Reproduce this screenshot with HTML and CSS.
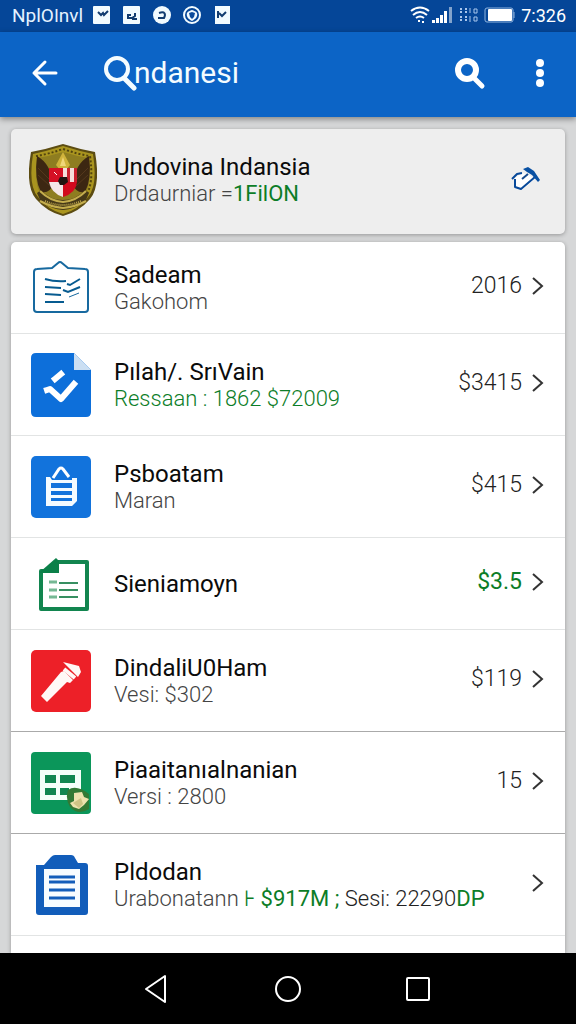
FILE: index.html
```html
<!DOCTYPE html>
<html lang="id">
<head>
    <meta charset="UTF-8">
    <meta name="viewport" content="width=device-width, initial-scale=1.0">
    <title>ndanesi</title>
    <link rel="stylesheet" href="styles.css">
</head>
<body>
    <div class="status-bar">
        <span class="carrier">NplO&#x1C0;nvl</span>
        <div class="notifications">
            <svg width="18" height="18" viewBox="0 0 18 18"><rect width="17" height="18" rx="1" fill="#f2fbff"/><path d="M5 6l3 3 2-2 1 2 4-4" fill="none" stroke="#123c70" stroke-width="2"/></svg>
            <svg width="18" height="18" viewBox="0 0 18 18"><rect width="17" height="18" rx="1" fill="#f2fbff"/><path d="M8 9H5v3h4l3-2V7M9 13h5" fill="none" stroke="#123c70" stroke-width="2"/></svg>
            <svg width="18" height="18" viewBox="0 0 18 18"><circle cx="9" cy="9" r="9" fill="#f2fbff"/><path d="M6 7c6-2 7 1 5 5H5" fill="none" stroke="#123c70" stroke-width="2"/></svg>
            <svg width="18" height="18" viewBox="0 0 18 18"><circle cx="9" cy="9" r="8" fill="none" stroke="#f2fbff" stroke-width="2"/><path d="M9 15c-4-2-6-5-5-8 1-2 3-2 5-3 2 1 4 1 5 3 1 3-1 6-5 8z" fill="#f2fbff"/><path d="M6 7l3-1 3 1-1 4-2 2-2-2z" fill="#0c4c9c"/></svg>
            <svg width="18" height="18" viewBox="0 0 18 18"><rect x="2" width="15" height="18" fill="#f2fbff"/><path d="M6 7l3 3 4-4M5 5v7" fill="none" stroke="#123c70" stroke-width="2"/></svg>
        </div>
        <div class="system">
            <svg width="20" height="18" viewBox="0 0 20 18" fill="none" stroke="#fff" stroke-width="2"><path d="M1 5q9-7 18 0M3 9q7-6 14 0M6 12q4-3 8 0"/><path d="M8 15h2M12 16h2"/></svg>
            <svg width="20" height="18" viewBox="0 0 20 18" fill="#fff"><path d="M0 14h3v3H0zM4 12h3v5H4zM8 9h3v8H8zM12 5h3v12h-3z"/><path d="M17 1h3v16h-3z" opacity=".5"/></svg>
            <svg width="20" height="18" viewBox="0 0 20 18" fill="none" stroke="#a9c6ec" stroke-width="2"><path d="M3 2v5M8 2v5M3 10v6M8 10v6" stroke-dasharray="2 1"/><path d="M12 2v5M12 10v6M16 3h3v4h-3zM16 11h3v4h-3z" stroke-width="1"/></svg>
            <svg width="31" height="18" viewBox="0 0 31 18"><rect x="1" y="2" width="28" height="14" rx="2" fill="none" stroke="#8fb3de"/><rect x="4" y="3" width="24" height="12" rx="1" fill="#fff"/><path d="M30 6v6" stroke="#8fb3de"/></svg>
            <span class="clock">7:326</span>
        </div>
    </div>

    <header class="app-bar">
        <button class="icon-btn" aria-label="Back">
            <svg width="28" height="28" viewBox="0 0 28 28" fill="none" stroke="#fff" stroke-width="3" stroke-linecap="round" stroke-linejoin="round"><path d="M15 3L4 14l11 11M4 14h22"/></svg>
        </button>
        <h1>
            <svg width="34" height="36" viewBox="0 0 34 36" fill="none" stroke="#f4fcff" stroke-linecap="round"><circle cx="13" cy="14" r="11" stroke-width="4"/><path d="M21 24l9 9" stroke-width="5"/></svg>
            <span>ndanesi</span>
        </h1>
        <button class="icon-btn" aria-label="Search">
            <svg width="32" height="34" viewBox="0 0 32 34" fill="none" stroke="#fff" stroke-linecap="round"><circle cx="13" cy="14" r="9" stroke-width="6"/><path d="M21 23l7 7" stroke-width="5"/></svg>
        </button>
        <button class="icon-btn more" aria-label="More">
            <svg width="8" height="28" viewBox="0 0 8 28" fill="#fff"><circle cx="4" cy="4" r="4"/><circle cx="4" cy="14" r="4"/><circle cx="4" cy="24" r="4"/></svg>
        </button>
    </header>

    <main>
        <section class="card profile">
            <svg class="icon" width="68" height="72" viewBox="0 0 68 72">
                <path d="M2 8Q18 5 34 0q16 5 32 8 6 34-5 47-11 13-27 17Q18 68 7 55-4 42 2 8z" fill="#5c4c12"/>
                <path d="M4 10Q18 7 34 2q16 5 30 8 5 32-5 43-10 13-25 17Q19 66 9 53-1 42 4 10z" fill="#aa951f"/>
                <path d="M7 12q13-2 27-7 14 5 27 7 4 28-4 39" fill="none" stroke="#51430f" stroke-width="2" stroke-dasharray="2 2"/>
                <path d="M8 14q13-2 26-6 13 4 26 6 3 27-4 36Q48 62 34 66 20 62 12 50 5 41 8 14z" fill="#8e7d20"/>
                <path d="M8 12q14 8 16 28-3 10-12 8Q5 35 8 12zM60 12q-14 8-16 28 3 10 12 8 7-13 4-36z" fill="#3c2712"/>
                <path d="M9 24l12 12M9 31l12 11M59 24L47 36M59 31L47 42" stroke="#54381c"/>
                <path d="M34 8l7 13-4 5h-6l-4-5z" fill="#d0b33b"/><path d="M34 13l3 9h-6z" fill="#f0d679"/>
                <path d="M20 24h14v14H20z" fill="#d51024"/><path d="M34 24h14v14H34z" fill="#f5dedb"/>
                <path d="M38 24h3v14h-3zM45 24h3v14h-3z" fill="#c9202d"/>
                <path d="M20 38h14v15q-12-4-14-15z" fill="#f4e6e7"/><path d="M34 38h14q-1 11-14 15z" fill="#d20a1e"/>
                <path d="M31 33h7l1 5-4 3h-4l-2-4z" fill="#211411"/><path d="M25 28l3 3" stroke="#fff"/>
                <path d="M8 49l4-3q9 10 22 10t22-10l4 3-4 9q-11 7-22 8-11-1-22-8z" fill="#453817"/>
                <path d="M11 47q10 10 23 11 13-1 23-11M11 57q11 6 23 7 12-1 23-7" fill="none" stroke="#c4ad4d" stroke-width="2"/>
                <path d="M16 57q18 8 36 0" fill="none" stroke="#bda64b" stroke-width="2" stroke-dasharray="1 1"/>
            </svg>
            <div class="text">
                <h2>Undovina Indansia</h2>
                <p>Drdaurniar =<span class="green">1FilON</span></p>
            </div>
            <button class="icon-btn" aria-label="Edit">
                <svg width="32" height="28" viewBox="0 0 32 28" stroke-linejoin="round">
                    <path d="M6 12l7-5 5 1 8 5-13 11-6-3z" fill="#fff"/>
                    <path d="M3 13l5-5 5-1M6 13v8l6 2 14-12" fill="none" stroke="#08499a" stroke-width="2"/>
                    <path d="M14 3l5-2 6 4 6 9-2 2-6-7-5-3z" fill="#0850a3"/><path d="M13 13l6-5" stroke="#174a8c" stroke-width="2"/>
                </svg>
            </button>
        </section>

        <nav class="card list">
            <a href="#" class="row short">
                <svg class="icon" width="60" height="62" viewBox="0 0 60 62" fill="none" stroke="#17699f" stroke-width="2">
                    <path d="M6 12l15-1 6-5q2-2 4 0l6 5 17 1q3 0 3 3v37q0 3-3 3H6q-3 0-3-3V15q0-3 3-3z"/>
                    <path d="M14 22q10 3 21 2M14 30l16 1M14 37l16 1M14 45h19M36 27l3 1 10-6M32 33l5 2 12-5" stroke="#075b90"/><path d="M38 40l10-4" stroke-width="1"/>
                </svg>
                <div class="text"><h2>Sadeam</h2><p>Gakohom</p></div>
                <span class="value">2016</span>
                <svg class="chevron" width="12" height="20" viewBox="0 0 12 20"><path d="M1 2l9 8-9 8"/></svg>
            </a>
            <a href="#" class="row">
                <svg class="icon" width="60" height="64" viewBox="0 0 60 64">
                    <path d="M5 0h38l17 17v42q0 5-5 5H5q-5 0-5-5V5q0-5 5-5z" fill="#0d6fda"/><path d="M43 0l17 17H43z" fill="#cbdff3"/>
                    <path d="M24 26l6-5M16 37l3-1 11 10 13-15" fill="none" stroke="#fff" stroke-width="6" stroke-linecap="square" stroke-linejoin="round"/>
                </svg>
                <div class="text"><h2>P&#x131;lah/. Sr&#x131;Vain</h2><p class="green">Ressaan : 1862 $72009</p></div>
                <span class="value">$3415</span>
                <svg class="chevron" width="12" height="20" viewBox="0 0 12 20"><path d="M1 2l9 8-9 8"/></svg>
            </a>
            <a href="#" class="row">
                <svg class="icon" width="60" height="62" viewBox="0 0 60 62">
                    <rect width="60" height="62" rx="5" fill="#1273dc"/>
                    <path d="M22 22l6-9q2-2 4 0l6 8" fill="none" stroke="#fff" stroke-width="3"/>
                    <path d="M15 21h4l2 3h20v-2h5v23l-5 5H15z" fill="#f4fbff"/>
                    <path d="M20 27h21v5H20zM20 35h21v4H20zM20 42h21v3H20z" fill="#1273dc"/>
                </svg>
                <div class="text"><h2>Psboatam</h2><p>Maran</p></div>
                <span class="value">$415</span>
                <svg class="chevron" width="12" height="20" viewBox="0 0 12 20"><path d="M1 2l9 8-9 8"/></svg>
            </a>
            <a href="#" class="row short">
                <svg class="icon" width="60" height="62" viewBox="0 0 60 62">
                    <path d="M10 18h8L27 9h29v47H10z" fill="#fff" stroke="#12854f" stroke-width="4" stroke-linejoin="round"/>
                    <path d="M9 19L25 5l3 3v12H9z" fill="#0b8049"/>
                    <path d="M18 29h8M18 37h8M18 44h8" stroke="#75b894" stroke-width="3"/><path d="M28 30h19M28 37h19M28 44h19" stroke="#378f61" stroke-width="2"/>
                </svg>
                <div class="text"><h2>Sieniamoyn</h2></div>
                <span class="value green">$3.5</span>
                <svg class="chevron" width="12" height="20" viewBox="0 0 12 20"><path d="M1 2l9 8-9 8"/></svg>
            </a>
            <a href="#" class="row strong">
                <svg class="icon" width="60" height="62" viewBox="0 0 60 62">
                    <rect width="60" height="62" rx="5" fill="#ed2028"/>
                    <path d="M10 46l20-24 3-1 9 9-3 3-3-1-20 20zM32 12l16 4 2 6-3 5z" fill="#fff8f6"/><path d="M33 19l11 9" stroke="#fff8f6" stroke-width="4"/>
                </svg>
                <div class="text"><h2>DindaliU0Ham</h2><p>Vesi: $302</p></div>
                <span class="value">$119</span>
                <svg class="chevron" width="12" height="20" viewBox="0 0 12 20"><path d="M1 2l9 8-9 8"/></svg>
            </a>
            <a href="#" class="row strong">
                <svg class="icon" width="60" height="62" viewBox="0 0 60 62">
                    <rect width="60" height="62" rx="4" fill="#0b965a"/><path d="M9 18h41v30H9z" fill="#f5fff9"/>
                    <path d="M14 23h11v8H14zM29 23h15v8H29zM14 36h11v7H14zM29 36h9v7h-9z" fill="#128650"/>
                    <path d="M37 38q8-6 21 4v15q-11 7-19-2-5-8-2-17z" fill="#337934"/><path d="M43 41l8-1 2 5 5 2-5 6-5 4-6-2-3-4 4-2z" fill="#eee2ae"/><path d="M42 51l8-5 2 6-4 4z" fill="#cfc485"/>
                </svg>
                <div class="text"><h2>Piaaitan&#x131;alnanian</h2><p>Versi : 2800</p></div>
                <span class="value">15</span>
                <svg class="chevron" width="12" height="20" viewBox="0 0 12 20"><path d="M1 2l9 8-9 8"/></svg>
            </a>
            <a href="#" class="row">
                <svg class="icon" width="60" height="62" viewBox="0 0 60 62">
                    <path d="M5 11h8l7-8q2-2 4-2h16q3 0 4 3l3 5h7q3 0 3 3v46q0 3-3 3H8q-3 0-3-3z" fill="#125dba"/>
                    <path d="M13 15h36v38H13z" fill="#f7fcff"/><path d="M18 23h26M18 28h26M18 36h26M18 44h26" stroke="#125dba" stroke-width="3"/>
                </svg>
                <div class="text"><h2>Pldodan</h2><p>Urabonatann <span class="green">&#x22A6; $917M ;</span> <span class="dark">Sesi: 22290</span><span class="green">DP</span></p></div>
                <svg class="chevron" width="12" height="20" viewBox="0 0 12 20"><path d="M1 2l9 8-9 8"/></svg>
            </a>
        </nav>
    </main>

    <footer class="nav-bar">
        <button class="icon-btn" aria-label="Back"><svg width="28" height="30" viewBox="0 0 28 30" fill="none" stroke="#fff" stroke-width="2" stroke-linejoin="round"><path d="M21 2v26L2 15z"/></svg></button>
        <button class="icon-btn" aria-label="Home"><svg width="28" height="30" viewBox="0 0 28 30" fill="none" stroke="#fff" stroke-width="2"><circle cx="14" cy="15" r="12"/></svg></button>
        <button class="icon-btn" aria-label="Recent apps"><svg width="28" height="30" viewBox="0 0 28 30" fill="none" stroke="#fff" stroke-width="2"><rect x="3" y="4" width="22" height="22" rx="1"/></svg></button>
    </footer>
</body>
</html>
```
FILE: styles.css
```css
* {
    box-sizing: border-box;
}

body {
    margin: 0;
    min-height: 100vh;
    display: flex;
    flex-direction: column;
    background: #d6d7d8;
    font-family: Roboto, "Liberation Sans", sans-serif;
    color: #0b0b0b;
}

h1, h2, p {
    margin: 0;
    font-weight: 400;
}

svg {
    display: block;
    flex: none;
}

.icon-btn {
    display: flex;
    align-items: center;
    justify-content: center;
    padding: 0;
    border: none;
    background: none;
    cursor: pointer;
}

/* Status bar */
.status-bar {
    display: flex;
    align-items: center;
    height: 32px;
    padding: 0 10px 2px 12px;
    background: #054698;
    color: #e4f2ff;
    font-size: 18px;
}

.carrier {
    font-size: 19px;
}

.notifications {
    display: flex;
    gap: 12px;
    margin-left: 10px;
}

.system {
    display: flex;
    align-items: center;
    gap: 6px;
    margin-left: auto;
}

.system svg:first-child {
    margin-right: -4px;
}

.clock {
    color: #fff;
}

/* App bar */
.app-bar {
    display: flex;
    align-items: center;
    height: 85px;
    padding: 0 32px 4px 30px;
    background: #0c64c6;
    box-shadow: 0 2px 6px rgba(0, 0, 0, 0.4);
}

.app-bar h1 {
    display: flex;
    align-items: center;
    flex: 1;
    margin-left: 46px;
    color: #f4fcff;
    font-size: 30px;
}

.app-bar h1 svg {
    margin-right: -4px;
}

.more {
    margin-left: 50px;
}

/* Cards */
main {
    flex: 1;
    display: flex;
    flex-direction: column;
    gap: 8px;
    padding: 12px 11px 0;
}

.card {
    border-radius: 5px;
    background: #fff;
    box-shadow: 0 1px 4px rgba(0, 0, 0, 0.3);
}

.profile {
    display: flex;
    align-items: center;
    height: 105px;
    padding: 0 24px 4px 18px;
    background: #eeeeee;
}

.list {
    flex: 1;
    border-radius: 5px 5px 0 0;
}

.row {
    display: flex;
    align-items: center;
    min-height: 102px;
    padding: 0 21px 0 20px;
    border-bottom: 1px solid #e2e4e4;
    color: inherit;
    text-decoration: none;
}

.row.short {
    min-height: 92px;
}

.row.strong {
    border-bottom-color: #aaa;
}

.text {
    flex: 1;
    margin-left: 23px;
    white-space: nowrap;
}

.profile .text {
    margin-left: 17px;
}

.text h2 {
    font-size: 24px;
    line-height: 28px;
}

.text p {
    color: #444;
    font-size: 22px;
    font-weight: 300;
    line-height: 26px;
}

.value {
    padding-bottom: 4px;
    color: #222;
    font-size: 23px;
    font-weight: 300;
}

.text .green,
.value.green {
    color: #0c7d27;
}

.value.green,
.text span.green {
    font-weight: 400;
}

.text .dark {
    color: #222;
}

.chevron {
    margin: 0 0 4px 10px;
    fill: none;
    stroke: #333;
    stroke-width: 2;
}

/* Navigation bar */
.nav-bar {
    display: flex;
    align-items: center;
    justify-content: center;
    gap: 102px;
    height: 71px;
    background: #000;
}
```
